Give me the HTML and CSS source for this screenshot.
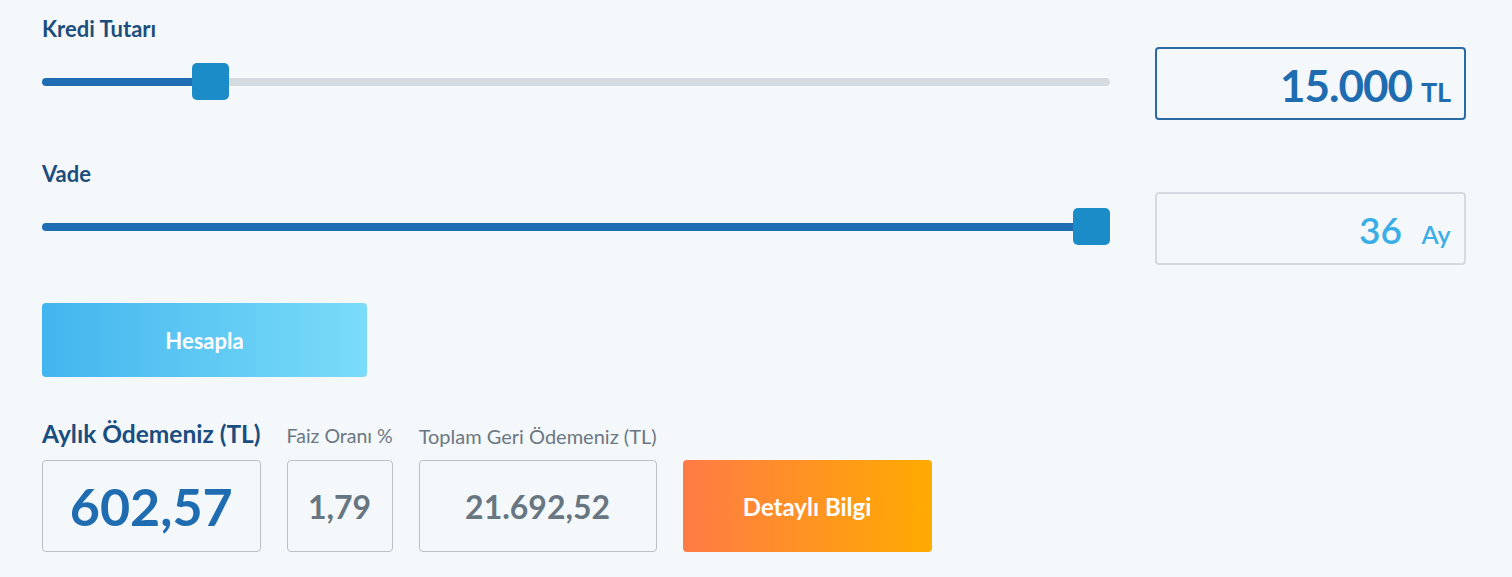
FILE: index.html
```html
<!DOCTYPE html>
<html lang="tr">
<head>
    <meta charset="UTF-8">
    <meta name="viewport" content="width=device-width, initial-scale=1.0">
    <title>Kredi Hesaplama</title>
    <link rel="stylesheet" href="styles.css">
</head>
<body>
    <div class="calculator">
        <div class="field">
            <label class="field-label" for="amount">Kredi Tutarı</label>
            <div class="field-row">
                <input class="range" type="range" id="amount" min="1000" max="97000" step="500" value="15000" style="--fill: 15.8%">
                <div class="value-box value-box--active">
                    <span class="value-number">15.000</span>
                    <span class="value-unit value-unit--tl">TL</span>
                </div>
            </div>
        </div>

        <div class="field field--second">
            <label class="field-label" for="term">Vade</label>
            <div class="field-row">
                <input class="range" type="range" id="term" min="3" max="36" step="1" value="36" style="--fill: 100%">
                <div class="value-box">
                    <span class="value-number value-number--light">36</span>
                    <span class="value-unit value-unit--light">Ay</span>
                </div>
            </div>
        </div>

        <button class="btn-calc" type="button">Hesapla</button>

        <div class="results">
            <div class="result">
                <div class="result-label result-label--main">Aylık Ödemeniz (TL)</div>
                <div class="result-box result-box--main">602,57</div>
            </div>
            <div class="result">
                <div class="result-label">Faiz Oranı %</div>
                <div class="result-box">1,79</div>
            </div>
            <div class="result">
                <div class="result-label result-label--wide">Toplam Geri Ödemeniz (TL)</div>
                <div class="result-box">21.692,52</div>
            </div>
            <button class="btn-detail" type="button">Detaylı Bilgi</button>
        </div>
    </div>
</body>
</html>
```

FILE: styles.css
```css
body {
    margin: 0;
    background: #f4f8fb;
    font-family: Lato, "Open Sans", sans-serif;
}
.calculator {
    padding: 16px 46px 0 42px;
}
.field-label {
    display: block;
    font-size: 22px;
    line-height: 26px;
    font-weight: 700;
    color: #1c4e7d;
}
.field-row {
    display: flex;
    align-items: center;
    gap: 45px;
    margin-top: 5px;
}
.field--second {
    margin-top: 41px;
}
.range {
    -webkit-appearance: none;
    appearance: none;
    flex: 1;
    height: 37px;
    margin: 0 0 4px;
    background: transparent;
}
.range::-webkit-slider-runnable-track {
    height: 8px;
    border-radius: 4px;
    background: linear-gradient(to right, #1f6db2 var(--fill), #d4dce2 var(--fill));
}
.range::-webkit-slider-thumb {
    -webkit-appearance: none;
    width: 37px;
    height: 37px;
    margin-top: -14.5px;
    border: none;
    border-radius: 5px;
    background: #1b8cc7;
}
.value-box {
    display: flex;
    justify-content: flex-end;
    align-items: baseline;
    width: 311px;
    height: 73px;
    box-sizing: border-box;
    padding: 0 8px 0 0;
    border: 2px solid #d3dbe1;
    border-radius: 4px;
    line-height: 72px;
}
.value-box--active {
    border-color: #2a6aa5;
}
.value-number {
    font-size: 44px;
    font-weight: 700;
    color: #1f6cb0;
    letter-spacing: -1px;
    margin-right: 4px;
}
.value-number--light {
    font-size: 37px;
    font-weight: 600;
    color: #3aaee6;
    letter-spacing: 0;
    margin-right: 14px;
}
.value-unit {
    width: 40px;
    text-align: center;
}
.value-unit--tl {
    font-size: 27px;
    font-weight: 700;
    color: #1f6cb0;
}
.value-unit--light {
    font-size: 25px;
    font-weight: 600;
    color: #3aaee6;
}
.btn-calc {
    display: block;
    width: 325px;
    height: 74px;
    margin-top: 38px;
    border: none;
    border-radius: 4px;
    background: linear-gradient(to right, #43b5ee, #7adcf9);
    color: #fff;
    font-family: inherit;
    font-size: 22px;
    font-weight: 700;
    cursor: pointer;
}
.results {
    display: flex;
    align-items: flex-end;
    gap: 26px;
    margin-top: 43px;
}
.result-label {
    font-size: 19.5px;
    line-height: 24px;
    color: #6b7782;
    white-space: nowrap;
}
.result-label--wide {
    font-size: 20px;
}
.result-label--main {
    font-size: 24.5px;
    line-height: 28px;
    font-weight: 700;
    color: #1a4d80;
}
.result-box {
    display: flex;
    justify-content: center;
    align-items: center;
    height: 92px;
    margin-top: 12px;
    box-sizing: border-box;
    border: 1px solid #b9c1c7;
    border-radius: 4px;
    font-size: 32px;
    font-weight: 700;
    color: #687682;
}
.result-box--main {
    font-size: 52px;
    color: #1f6cb0;
}
.btn-detail {
    width: 249px;
    height: 92px;
    border: none;
    border-radius: 4px;
    background: linear-gradient(to right, #ff7b45, #ffab00);
    color: #fff;
    font-family: inherit;
    font-size: 24px;
    font-weight: 700;
    cursor: pointer;
}
```
